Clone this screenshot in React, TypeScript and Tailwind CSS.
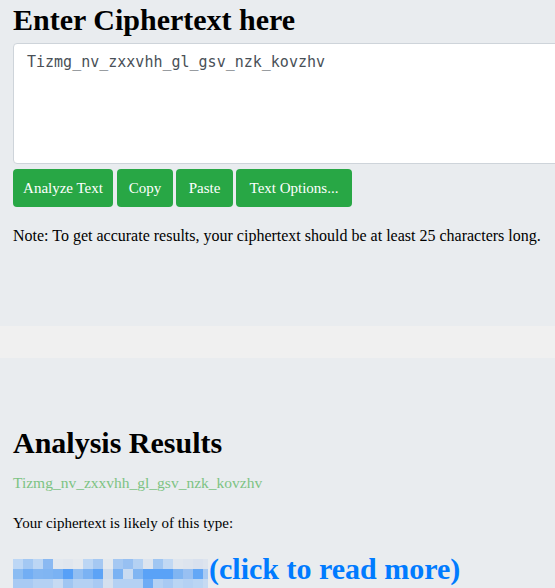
import React from "react";

const rows: string[][] = [
  ["#bdd7f5","#a3c8f3","#bcd6f4","#8ab9f2","#e2e8ef","#e0e6ee","#e5e9ee","#bcd6f4","#a5c8f2","#e4e9ee","#a5c8f2","#97c0f2","#b4d1f3","#dde4ee","#a0c6f2","#c1d8f3","#e0e6ee","#dde4ee","#d9e1ee","#dde4ee"],
  ["#8bbcf2","#72aef4","#82b6f2","#80b5f2","#7ab2f3","#57a0f7","#91bef2","#7ab2f3","#5ca3f6","#cfdcec","#7ab2f3","#c9dbf1","#80b5f2","#5aa2f7","#5aa2f7","#5aa2f7","#80b5f2","#98c0f2","#63a7f6","#a8caf3"],
  ["#a8caf3","#a8caf3","#b4d1f3","#b4d1f3","#c6daf2","#a0c6f2","#b4d1f3","#b4d1f3","#a8caf3","#d4e0ee","#b4d1f3","#b4d1f3","#b4d1f3","#6eacf5","#b4d1f3","#a8caf3","#bad5f3","#b4d1f3","#bad5f3","#c6daf2"],
];

function Mosaic() {
  return (
    <svg width="196" height="33" viewBox="0 0 196 33" className="block shrink-0">
      {rows.map((r, ri) =>
        r.map((c, ci) => (
          <rect key={`${ri}-${ci}`} x={ci * 10} y={ri * 10} width={ci === 19 ? 5 : 10} height={10} fill={c} />
        ))
      )}
      <rect x="130" y="30" width="7" height="3" fill="#007bff" />
    </svg>
  );
}

export default function App() {
  const serif = { fontFamily: '"Liberation Serif", serif' };
  return (
    <div className="w-[555px] h-[588px] overflow-hidden bg-[#e9ecef] text-[#212529]" style={serif}>
      <div className="pl-[13px] pt-[0px]">
        <h2 className="text-[30px] leading-[40px] font-bold text-black">Enter Ciphertext here</h2>
        <div className="mt-[3px] w-[600px] h-[121px] bg-white border border-[#ced4da] rounded-[4px] px-[13px] pt-[6px] text-[15px] leading-[24px] text-[#495057]" style={{ fontFamily: '"DejaVu Sans Mono", monospace' }}>
          Tizmg_nv_zxxvhh_gl_gsv_nzk_kovzhv
        </div>
        <div className="mt-[5px] flex">
          <button className="h-[38px] w-[100px] rounded-[4px] bg-[#28a745] text-white text-[15px]">Analyze Text</button>
          <button className="ml-[4px] h-[38px] w-[56px] rounded-[4px] bg-[#28a745] text-white text-[15px]">Copy</button>
          <button className="ml-[3px] h-[38px] w-[57px] rounded-[4px] bg-[#28a745] text-white text-[15px]">Paste</button>
          <button className="ml-[3px] h-[38px] w-[116px] rounded-[4px] bg-[#28a745] text-white text-[15px]">Text Options...</button>
        </div>
        <p className="mt-[17px] text-[16px] leading-[24px] text-black">
          Note: To get accurate results, your ciphertext should be at least 25 characters long.
        </p>
      </div>
      <div className="mt-[78px] h-[32px] bg-[#f0f0f0]"></div>
      <div className="pl-[13px] pt-[65px]">
        <h2 className="text-[30px] leading-[40px] font-bold text-black">Analysis Results</h2>
        <p className="mt-[8px] text-[15.5px] leading-[24px] text-[#7dc383]">Tizmg_nv_zxxvhh_gl_gsv_nzk_kovzhv</p>
        <p className="mt-[16px] text-[15px] leading-[24px] text-black">Your ciphertext is likely of this type:</p>
        <div className="mt-[24px] flex items-start">
          <Mosaic />
          <span className="-mt-[5px] text-[30px] leading-[30px] font-bold text-[#007bff]">(click to read more)</span>
        </div>
      </div>
    </div>
  );
}
